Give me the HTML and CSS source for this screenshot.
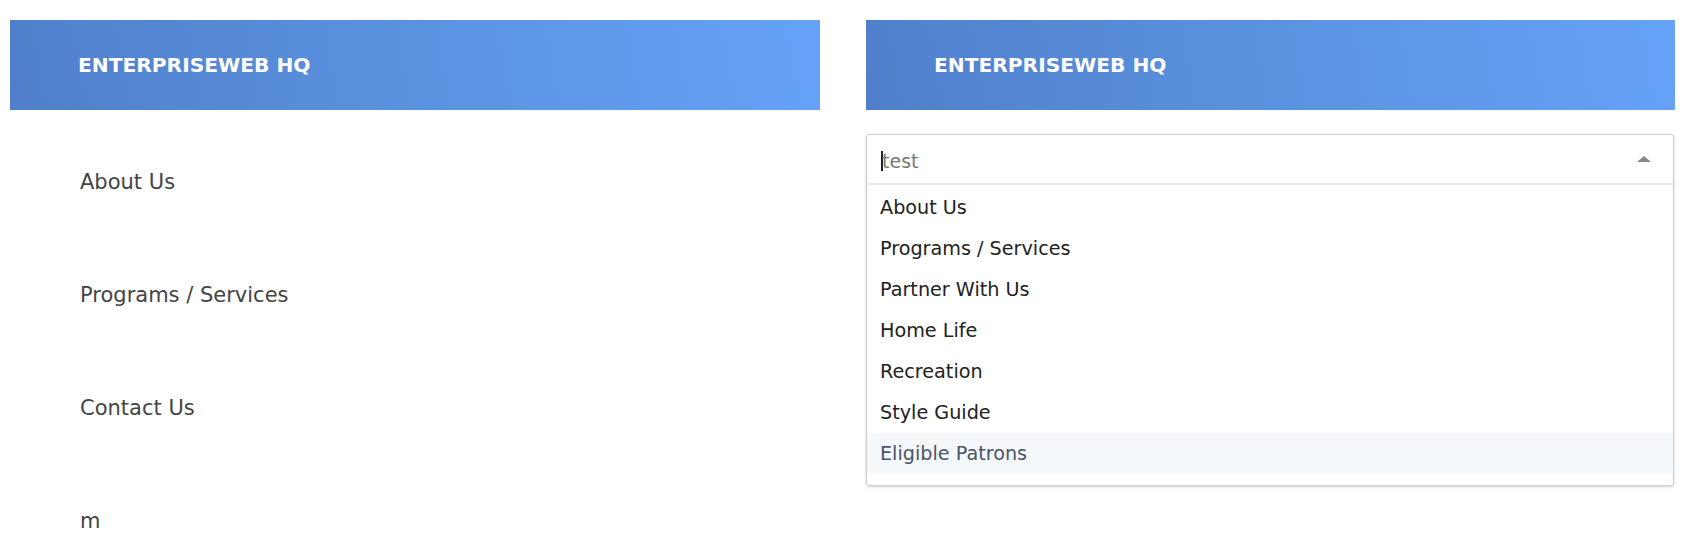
FILE: index.html
```html
<!DOCTYPE html>
<html lang="en">
<head>
    <meta charset="UTF-8">
    <meta name="viewport" content="width=device-width, initial-scale=1.0">
    <title>EnterpriseWeb HQ</title>
    <link rel="stylesheet" href="styles.css">
</head>
<body>
    <div class="page">
        <!-- Menu aberto como lista -->
        <section class="col">
            <header class="bar">ENTERPRISEWEB HQ</header>
            <ul class="menu">
                <li>About Us</li>
                <li>Programs / Services</li>
                <li>Contact Us</li>
                <li>m</li>
            </ul>
        </section>

        <!-- Menu como select com busca -->
        <section class="col">
            <header class="bar">ENTERPRISEWEB HQ</header>
            <div class="select">
                <div class="select-input">
                    <span class="cursor"></span>
                    <span class="placeholder">test</span>
                    <span class="arrow"></span>
                </div>
                <ul class="options">
                    <li>About Us</li>
                    <li>Programs / Services</li>
                    <li>Partner With Us</li>
                    <li>Home Life</li>
                    <li>Recreation</li>
                    <li>Style Guide</li>
                    <li class="active">Eligible Patrons</li>
                </ul>
            </div>
        </section>
    </div>
</body>
</html>
```

FILE: styles.css
```css
body {
    margin: 0;
    font-family: 'DejaVu Sans', 'Liberation Sans', sans-serif;
    background-color: #fff;
    color: #333;
}
.page {
    display: grid;
    grid-template-columns: 810px 809px;
    column-gap: 46px;
    padding: 20px 9px 0 10px;
}
.bar {
    height: 90px;
    display: flex;
    align-items: center;
    padding-left: 68px;
    background: linear-gradient(80deg, #4f7fcb 0%, #5b92e0 50%, #66a2f7 100%);
    color: #fff;
    font-weight: bold;
    font-size: 20.2px;
}
.menu {
    list-style: none;
    margin: 0;
    padding: 16px 0 0 70px;
}
.menu li {
    font-size: 21px;
    line-height: 25px;
    padding: 44px 0;
    color: #444;
}
.menu li:last-child {
    padding-bottom: 0;
}
.select {
    margin: 24px 1px 0 0;
    border: 1px solid #cfcfcf;
    border-radius: 3px;
    box-shadow: 0 1px 3px rgba(0, 0, 0, 0.18);
    background-color: #fff;
}
.select-input {
    height: 48px;
    display: flex;
    align-items: center;
    padding: 0 22px 0 14px;
    border-bottom: 2px solid #e8e8e8;
}
.cursor {
    width: 2px;
    height: 20px;
    margin-top: 4px;
    background-color: #222;
}
.placeholder {
    margin: 4px 0 0 -1px;
    font-size: 19px;
    color: #777;
}
.arrow {
    margin-left: auto;
    width: 0;
    height: 0;
    border-left: 7px solid transparent;
    border-right: 7px solid transparent;
    border-bottom: 6px solid #888;
}
.options {
    list-style: none;
    margin: 0;
    padding: 2px 0 11px;
}
.options li {
    height: 41px;
    line-height: 41px;
    padding-left: 13px;
    font-size: 19.2px;
    color: #222;
}
.options li.active {
    background-color: #f5f8fb;
    color: #4a5567;
}
```
